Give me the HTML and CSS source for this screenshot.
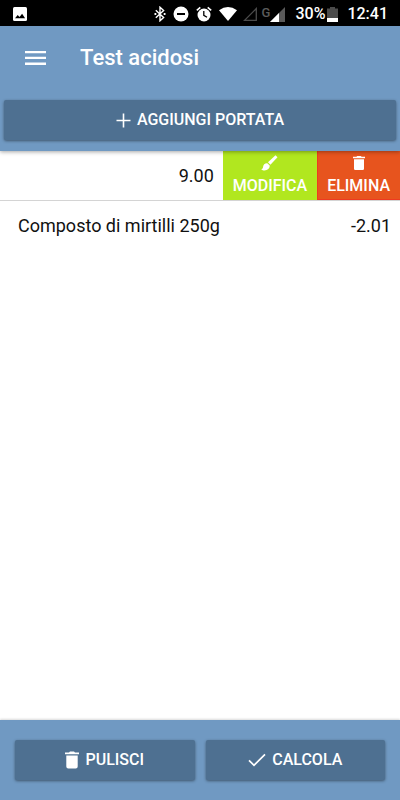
FILE: index.html
```html
<!DOCTYPE html>
<html lang="it">
<head>
<meta charset="utf-8">
<meta name="viewport" content="width=device-width, initial-scale=1">
<title>Test acidosi</title>
<link rel="stylesheet" href="styles.css">
</head>
<body>
<div class="status">
  <svg width="14" height="14" viewBox="0 0 14 14"><rect width="14" height="14" rx="1.5" fill="#fff"/><path d="M2 11.3 4.700 8l1.800 2 2.600-3.300 3 4.600z" fill="#000"/></svg>
  <div class="status-icons">
    <svg width="12" height="16" viewBox="0 0 12 16" fill="none" stroke="#fff" stroke-width="1.4"><path d="M1.800 4.200 9.600 11.600 6 14.800V1.200l3.600 3.200-7.800 7.400"/><path d="M.5 7h1.800v2H.5zM9.700 7h1.800v2H9.700z" fill="#fff" stroke="none"/></svg>
    <svg width="16" height="16" viewBox="0 0 16 16"><circle cx="8" cy="8" r="7.500" fill="#fff"/><path d="M4 7h8v2H4z" fill="#000"/></svg>
    <svg width="16" height="16" viewBox="0 0 16 16"><circle cx="8" cy="9" r="6.500" fill="#fff"/><path d="M.8 4.300 4.300 1.300M15.200 4.300l-3.500-3" stroke="#fff" stroke-width="1.600"/><path d="M7.800 5v4.300l3.200 2" fill="none" stroke="#000" stroke-width="1.300"/></svg>
    <svg width="18" height="16" viewBox="0 0 18 16"><path d="M0 4.300Q9-2.300 18 4.300L9 15z" fill="#fff"/></svg>
  </div>
  <div class="signal">
    <svg width="14" height="14" viewBox="0 0 14 14"><path d="M1.500 13.300H13.300V1.500z" fill="none" stroke="#4c4c4c" stroke-width="1.300"/></svg>
    <span class="network">G</span>
    <svg width="15" height="15" viewBox="0 0 15 15"><path d="M0 15H15V0z" fill="#5a5a5a"/><path d="M0 15h9V6z" fill="#fff"/></svg>
  </div>
  <div class="battery">
    <span>30%</span>
    <svg width="11" height="15" viewBox="0 0 11 15"><path d="M3 0h5v1.500h3V15H0V1.500h3z" fill="#4c4c4c"/><path d="M0 11h11v4H0z" fill="#fff"/></svg>
  </div>
  <time>12:41</time>
</div>

<header class="header">
  <div class="toolbar">
    <button class="menu" type="button" aria-label="Menu"><svg width="21" height="14" viewBox="0 0 21 14"><path d="M0 0h21v2.300H0zM0 5.800h21v2.300H0zM0 11.600h21v2.300H0z" fill="#fff"/></svg></button>
    <h1>Test acidosi</h1>
  </div>
  <div class="add-bar">
    <button class="btn" type="button"><svg width="15" height="15" viewBox="0 0 15 15"><path d="M7.500.5v14M.5 7.500h14" stroke="#fff" stroke-width="1.600"/></svg>AGGIUNGI PORTATA</button>
  </div>
</header>

<main class="content">
  <ul class="list">
    <li class="row row-open">
      <span class="value">9.00</span>
      <button class="action action-edit" type="button">
        <svg width="17" height="16" viewBox="0 0 17 16" fill="#fff"><path d="M14.500.3 16.500 2.200 9.400 9.700 7 7.300z"/><path d="M6.300 8.200 8.700 10.600C8.900 13.500 6.500 15.500 3.600 15.500 2.200 15.500 1.100 14.900.2 14.200 1.300 14 2 13.300 2.100 11.800 2.200 9.600 4 8 6.300 8.200z"/></svg>
        MODIFICA
      </button>
      <button class="action action-delete" type="button">
        <svg width="12" height="16" viewBox="0 0 12 16" fill="#fff"><path d="M0 1.800h3.300L4.300.9h3.400l1 .9H12V3.300H0zM1 4.200h10v9.500q0 1.300-1.300 1.300H2.300Q1 15 1 13.700z"/></svg>
        ELIMINA
      </button>
    </li>
    <li class="row">
      <span class="name">Composto di mirtilli 250g</span>
      <span class="value">-2.01</span>
    </li>
  </ul>
</main>

<footer class="footer">
  <button class="btn" type="button"><svg width="14" height="18" viewBox="0 0 14 18" fill="#fff"><path d="M0 1.500h4L5 .5h4l1 1h4v1.800H0zM1.300 4.500h11.400v11q0 2-2 2H3.300q-2 0-2-2z"/></svg>PULISCI</button>
  <button class="btn" type="button"><svg width="18" height="14" viewBox="0 0 18 14"><path d="M1 7.300 6 12.300 17 1.300" fill="none" stroke="#fff" stroke-width="1.700"/></svg>CALCOLA</button>
</footer>
</body>
</html>
```
FILE: styles.css
```css
* {
  box-sizing: border-box;
}

body {
  margin: 0;
  min-height: 100vh;
  display: flex;
  flex-direction: column;
  background: #fff;
  color: #111;
  font-family: Roboto, "Liberation Sans", sans-serif;
}

svg {
  display: block;
  flex: none;
}

button {
  border: 0;
  margin: 0;
  color: #fff;
  font: 500 16px/20px Roboto, "Liberation Sans", sans-serif;
}

.status {
  display: flex;
  align-items: center;
  height: 26px;
  padding: 2px 12px 0 13px;
  background: #000;
  color: #fff;
  font-size: 16px;
  font-weight: 500;
  line-height: 24px;
}

.status-icons {
  display: flex;
  align-items: center;
  gap: 7px;
  margin-left: auto;
}

.signal {
  display: flex;
  align-items: center;
  margin-left: 6px;
}

.network {
  align-self: flex-start;
  margin-left: 5px;
  color: #5a5a5a;
  font-size: 13px;
  line-height: 12px;
}

.battery {
  display: flex;
  align-items: center;
  gap: 2px;
  margin: 0 9px 0 10px;
}

.header {
  position: relative;
  background: #7099c2;
  box-shadow: 0 1px 4px rgba(0, 0, 0, 0.35);
}

.toolbar {
  display: flex;
  align-items: center;
  gap: 24px;
  height: 64px;
  padding: 0 15px;
}

.menu {
  padding: 10px;
  background: none;
}

h1 {
  margin: 0;
  font-size: 22px;
  font-weight: 500;
  line-height: 28px;
  color: #fff;
}

.add-bar {
  display: flex;
  padding: 10px 4px 11px;
}

.btn {
  flex: 1;
  display: flex;
  align-items: center;
  justify-content: center;
  gap: 6px;
  height: 40px;
  padding: 0 12px;
  border-radius: 2px;
  background: #4e7091;
  box-shadow: 0 1px 3px rgba(0, 0, 0, 0.45);
}

.content {
  flex: 1;
}

.list {
  margin: 0;
  padding: 0;
  list-style: none;
}

.row {
  display: flex;
  align-items: center;
  justify-content: space-between;
  height: 50px;
  padding: 0 9px 0 18px;
  font-size: 18px;
  line-height: 24px;
}

.row-open {
  justify-content: flex-end;
  align-items: stretch;
  padding-right: 0;
  border-bottom: 1px solid #d4d4d4;
}

.row-open .value {
  align-self: center;
  margin-right: 9px;
}

.action {
  display: flex;
  flex-direction: column;
  align-items: center;
  gap: 5px;
  padding: 4px 10px 0;
}

.action-edit {
  background: #b1e71f;
}

.action-delete {
  background: #e7541e;
  box-shadow: inset 1px -1px #ee3a20;
}

.footer {
  display: flex;
  gap: 11px;
  height: 80px;
  padding: 20px 15px;
  background: #7099c2;
  box-shadow: 0 -1px 2px rgba(0, 0, 0, 0.15);
}
```
